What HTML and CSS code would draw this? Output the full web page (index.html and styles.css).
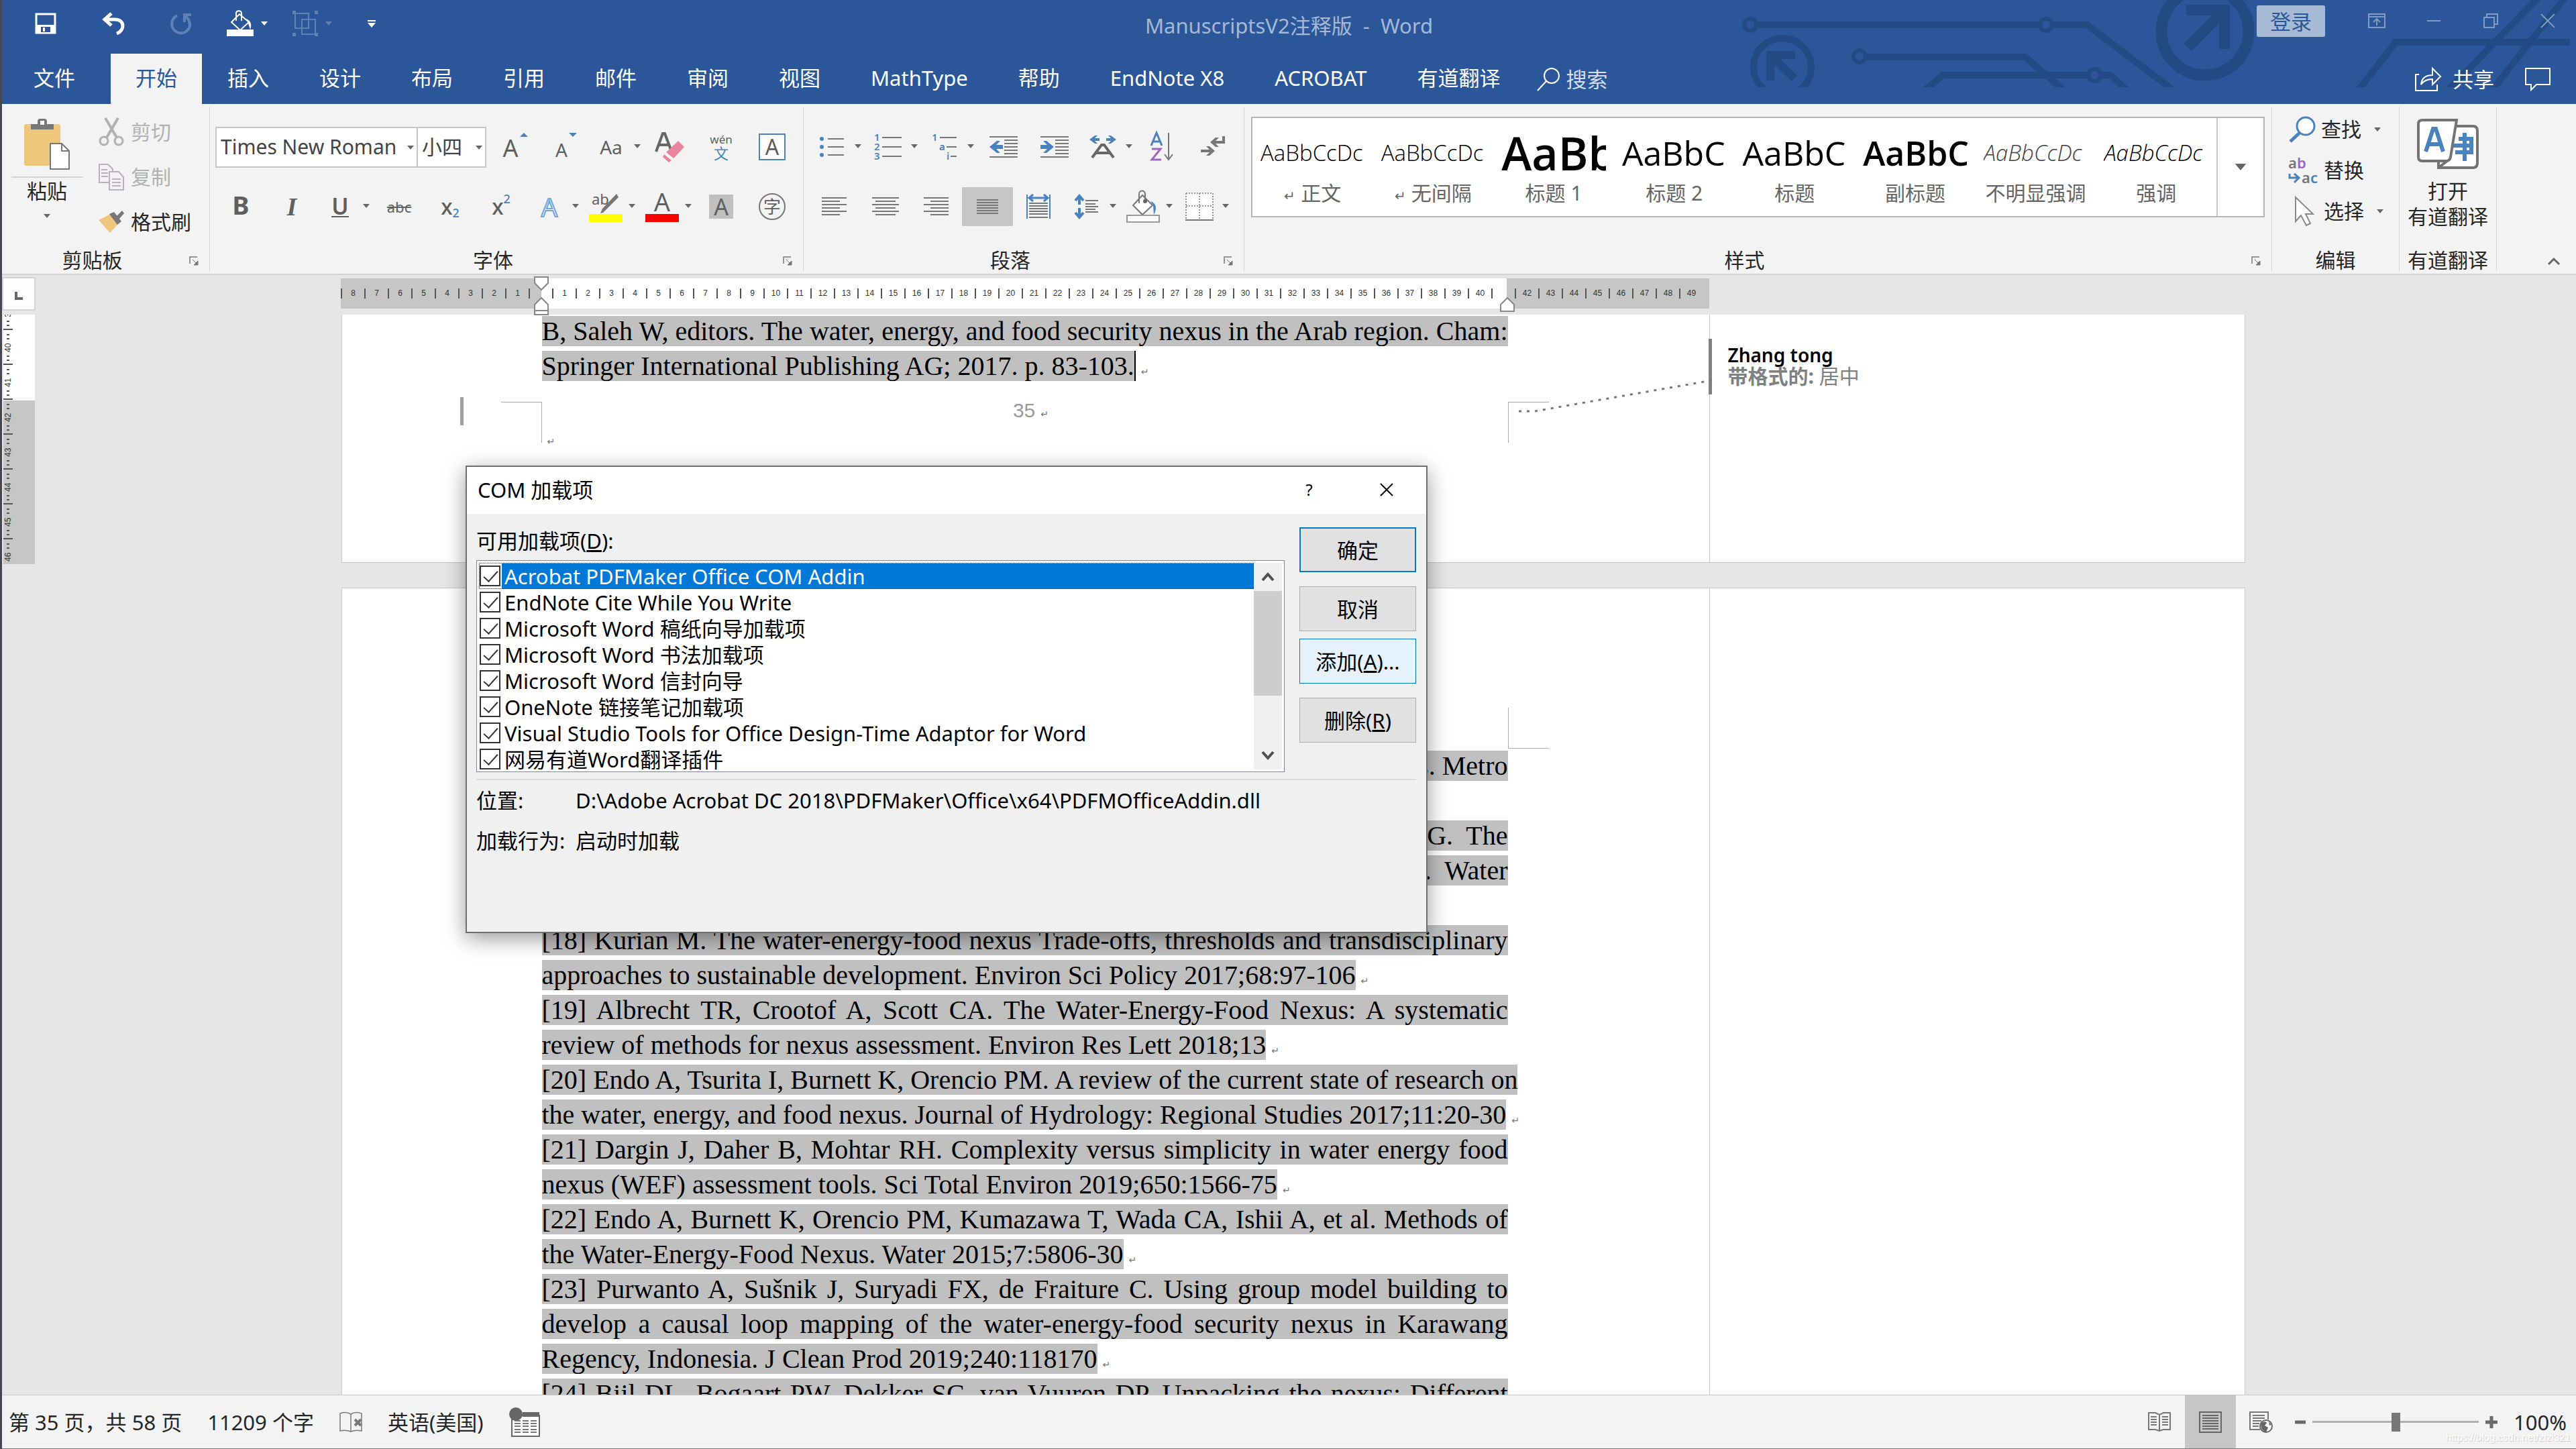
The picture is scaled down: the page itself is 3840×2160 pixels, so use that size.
FILE: index.html
```html
<!DOCTYPE html>
<html lang="zh-CN">

<head>
    <meta charset="utf-8">
    <title>ManuscriptsV2注释版 - Word</title>
    <link rel="stylesheet" href="styles.css">
</head>

<body>
    <svg width="0" height="0" class="defs">
        <symbol id="caret" viewBox="0 0 10 6"><path d="M0 0h10L5 6z" fill="currentColor"/></symbol>
        <symbol id="launcher" viewBox="0 0 14 14"><path d="M1 11V1h11" fill="none" stroke="#777" stroke-width="1.5"/><path d="M5 5l6 6M13 7v6H7z" fill="#777" stroke="#777"/></symbol>
        <symbol id="bucket" viewBox="0 0 50 50"><path d="M24 8L10 23l14 14 15-14z" fill="#fff" stroke="#777" stroke-width="2"/><path d="M19 20V6c0-6 9-6 9 0v14" fill="none" stroke="#777" stroke-width="2"/><circle cx="28" cy="17" r="3" fill="#666"/><path d="M36 17c9 3 10 11 5 20l-1-14z" fill="#4a82bd"/><path d="M1 38h48v10H1z" fill="#fff" stroke="#999" stroke-width="2"/></symbol>
    </svg>

    <div class="app">
        <header class="header">
            <svg class="circuit" viewBox="0 0 1260 130" width="1260" height="130" fill="none" stroke="#244a84" stroke-width="10">
                <circle cx="29" cy="37" r="9" stroke-width="6"/>
                <path d="M38 37H461M479 37h52L659 134"/>
                <circle cx="470" cy="37" r="9" stroke-width="6"/>
                <circle cx="77" cy="100" r="43"/>
                <path d="M59 120V82H96M62 85l33 32" stroke-width="12"/>
                <circle cx="192" cy="84" r="9" stroke-width="6"/>
                <path d="M201 85H439L496 134M290 134l26-22H533"/>
                <circle cx="542" cy="112" r="9" stroke-width="6"/>
                <path d="M551 112h15l24 22"/>
                <circle cx="707" cy="47" r="65" stroke-width="17"/>
                <path d="M679 15H736V73M681 71l52-53" stroke-width="16"/>
                <path d="M936 134L991 63H1251M1070 134L1204 -4M1135 134L1244 -4"/>
            </svg>
            <div class="title-row">
                <div class="quick">
                    <button class="quick-btn" aria-label="保存"><svg width="32" height="32" viewBox="0 0 32 32"><path d="M2 2h28v28H2z" fill="none" stroke="#fff" stroke-width="3"/><path d="M2 18h28v12H2z" fill="#fff"/><path d="M9 21h14v8H9z" fill="#2b579a"/><path d="M12 22h3v6h-3z" fill="#fff"/></svg></button>
                    <button class="quick-btn" aria-label="撤消"><svg width="34" height="34" viewBox="0 0 34 34"><path d="M14 2L4 11l10 9M5 11h14c16 0 15 17 3 21" fill="none" stroke="#fff" stroke-width="5"/></svg></button>
                    <button class="quick-btn faded" aria-label="恢复"><svg width="34" height="34" viewBox="0 0 34 34"><path d="M11 5C0 11 1 25 11 30c12 5 22-6 18-16-1-4-3-6-6-8M32 4H22v11" fill="none" stroke="#fff" stroke-width="4"/></svg></button>
                    <button class="quick-btn wide" aria-label="底纹"><svg width="40" height="40" viewBox="0 0 40 40"><path d="M19 6L7 18l13 12 13-12zM14 16V5c0-5 8-5 8 0v11" fill="none" stroke="#fff" stroke-width="2"/><path d="M29 13c7 3 9 9 6 16l-3-9z" fill="#fff"/><path d="M0 29h40v10H0z" fill="#fff"/></svg><svg class="caret white"><use href="#caret"/></svg></button>
                    <button class="quick-btn wide faded" aria-label="组合"><svg width="38" height="38" viewBox="0 0 38 38"><path d="M4 4h20v22H4zM14 13h20v22H14z" fill="none" stroke="#fff" stroke-width="2"/><path d="M0 0h5v5H0zM33 0h5v5h-5zM0 33h5v5H0zM33 33h5v5h-5z" fill="#fff"/></svg><svg class="caret white"><use href="#caret"/></svg></button>
                    <button class="quick-btn last" aria-label="自定义快速访问工具栏"><svg width="12" height="11" viewBox="0 0 12 11"><path d="M0 0h12v2H0zM0 4h12l-6 7z" fill="#fff"/></svg></button>
                </div>
                <div class="doc-title">ManuscriptsV2注释版&nbsp; -&nbsp; Word</div>
                <div class="window-tools">
                    <button class="login">登录</button>
                    <button class="win-btn" aria-label="功能区显示选项"><svg width="26" height="22" viewBox="0 0 26 22" fill="none" stroke="#7f9ac3" stroke-width="2"><path d="M1 1h24v20H1zM1 5h24M13 18V8M8 13l5-5 5 5"/></svg></button>
                    <button class="win-btn" aria-label="最小化"><svg width="20" height="22" viewBox="0 0 20 22"><path d="M0 11h20" stroke="#7f9ac3" stroke-width="2"/></svg></button>
                    <button class="win-btn" aria-label="还原"><svg width="22" height="22" viewBox="0 0 22 22" fill="none" stroke="#7f9ac3" stroke-width="2"><path d="M1 6h15v15H1zM5 6V1h16v15h-5"/></svg></button>
                    <button class="win-btn" aria-label="关闭"><svg width="22" height="22" viewBox="0 0 22 22"><path d="M1 1l20 20M21 1L1 21" stroke="#7f9ac3" stroke-width="2"/></svg></button>
                </div>
            </div>
            <nav class="tabs">
                <button class="tab">文件</button>
                <button class="tab active">开始</button>
                <button class="tab">插入</button>
                <button class="tab">设计</button>
                <button class="tab">布局</button>
                <button class="tab">引用</button>
                <button class="tab">邮件</button>
                <button class="tab">审阅</button>
                <button class="tab">视图</button>
                <button class="tab">MathType</button>
                <button class="tab">帮助</button>
                <button class="tab">EndNote X8</button>
                <button class="tab">ACROBAT</button>
                <button class="tab">有道翻译</button>
                <button class="search"><svg width="36" height="36" viewBox="0 0 36 36" fill="none" stroke="#fff" stroke-width="2"><circle cx="22" cy="13" r="11"/><path d="M14 21L1 35"/></svg>搜索</button>
                <div class="share-tools">
                    <button class="share"><svg width="40" height="36" viewBox="0 0 40 36" fill="none" stroke="#fff" stroke-width="2"><path d="M6 11H1v24h32v-9M9 26c1-10 7-14 17-14V2l12 12-12 12v-8c-8 0-13 2-17 8z"/></svg>共享</button>
                    <button class="share" aria-label="批注"><svg width="38" height="34" viewBox="0 0 38 34" fill="none" stroke="#fff" stroke-width="2"><path d="M1 1h36v24H17l-8 8v-8H1z"/></svg></button>
                </div>
            </nav>
        </header>

        <section class="ribbon">
            <div class="group">
                <div class="group-body clipboard">
                    <button class="paste">
                        <svg width="68" height="76" viewBox="0 0 68 76"><rect y="8" width="54" height="62" rx="3" fill="#eec77d"/><path d="M10 8h10V4q0-4 4-4h6q4 0 4 4v4h10v8H10z" fill="#777"/><path d="M24 3h6v6h-6z" fill="#fff"/><path d="M39 37h17l11 11v27H39z" fill="#fff" stroke="#777" stroke-width="2"/><path d="M56 37v11h11" fill="none" stroke="#777" stroke-width="2"/></svg>
                        <span class="paste-label">粘贴</span>
                        <svg class="caret"><use href="#caret"/></svg>
                    </button>
                    <div class="clip-list">
                        <button class="text-btn off"><svg width="38" height="42" viewBox="0 0 38 42" fill="none" stroke="#b1b1b1" stroke-width="3"><path d="M10 0l17 29M29 0L12 29" stroke-width="4"/><circle cx="8" cy="34" r="6"/><circle cx="30" cy="34" r="6"/></svg>剪切</button>
                        <button class="text-btn off"><svg width="38" height="40" viewBox="0 0 38 40" fill="#f6f0f8" stroke="#b9b1bc" stroke-width="2"><path d="M1 1h13l7 7v20H1z"/><path d="M4 9h9M4 14h10M4 19h10"/><path d="M16 12h14l7 8v19H16z"/><path d="M20 23h13M20 28h13M20 33h13"/></svg>复制</button>
                        <button class="text-btn"><svg width="38" height="34" viewBox="0 0 38 34"><path d="M0 14L18 5l12 14-13 14z" fill="#eec77d"/><path d="M16 5l7-3 11 14-6 5z" fill="#777"/><path d="M26 9l9-9 3 4-8 9z" fill="#777"/></svg>格式刷</button>
                    </div>
                </div>
                <div class="group-label">剪贴板</div>
                <svg class="launcher"><use href="#launcher"/></svg>
            </div>

            <div class="group">
                <div class="group-body">
                    <div class="tool-row">
                        <label class="combo"><select class="font-name" aria-label="字体"><option>Times New Roman</option></select><svg class="caret"><use href="#caret"/></svg></label>
                        <label class="combo"><select class="font-size" aria-label="字号"><option>小四</option></select><svg class="caret"><use href="#caret"/></svg></label>
                        <button class="tool grow">A<svg width="12" height="6" viewBox="0 0 12 6"><path d="M0 6h12L6 0z" fill="#4a82bd"/></svg></button>
                        <button class="tool grow small">A<svg width="12" height="6" viewBox="0 0 12 6"><path d="M0 0h12L6 6z" fill="#4a82bd"/></svg></button>
                        <button class="split"><span class="aa">Aa</span><svg class="caret"><use href="#caret"/></svg></button>
                        <button class="tool" aria-label="清除格式"><svg width="46" height="46" viewBox="0 0 46 46"><path d="M2 30L12 3h3l9 24M6 20h14" fill="none" stroke="#666" stroke-width="4"/><path d="M17 31L35 14l9 9-16 17z" fill="#e8859a"/><path d="M14 34l11 9-4 3-9-8z" fill="#e8859a"/></svg></button>
                        <button class="tool phonetic"><span>wén</span><span class="blue">文</span></button>
                        <button class="tool"><span class="boxed">A</span></button>
                    </div>
                    <div class="tool-row">
                        <button class="tool bold">B</button>
                        <button class="tool italic">I</button>
                        <button class="split"><span class="under">U</span><svg class="caret"><use href="#caret"/></svg></button>
                        <button class="tool strike">abc</button>
                        <button class="tool script">x<sub>2</sub></button>
                        <button class="tool script">x<sup>2</sup></button>
                        <button class="split"><span class="outline">A</span><svg class="caret"><use href="#caret"/></svg></button>
                        <button class="split"><span class="bar yellow">ab<svg class="pen" width="30" height="30" viewBox="0 0 30 30"><path d="M27 1l3 5-18 18-5 5-4 1 3-7z" fill="#777"/></svg></span><svg class="caret"><use href="#caret"/></svg></button>
                        <button class="split"><span class="bar red">A</span><svg class="caret"><use href="#caret"/></svg></button>
                        <button class="tool"><span class="shaded">A</span></button>
                        <button class="tool"><span class="circled">字</span></button>
                    </div>
                </div>
                <div class="group-label">字体</div>
                <svg class="launcher"><use href="#launcher"/></svg>
            </div>

            <div class="group">
                <div class="group-body">
                    <div class="tool-row">
                        <button class="split" aria-label="项目符号"><svg width="36" height="32" viewBox="0 0 36 32"><g fill="#4a82bd"><circle cx="3" cy="4" r="3"/><circle cx="3" cy="16" r="3"/><circle cx="3" cy="28" r="3"/></g><path d="M12 4h24M12 16h24M12 28h24" stroke="#777" stroke-width="2"/></svg><svg class="caret"><use href="#caret"/></svg></button>
                        <button class="split" aria-label="编号"><svg width="42" height="40" viewBox="0 0 42 40"><g class="num"><text x="0" y="11">1</text><text x="0" y="25">2</text><text x="0" y="39">3</text></g><path d="M12 6h29M12 20h29M12 34h29" stroke="#777" stroke-width="2"/></svg><svg class="caret"><use href="#caret"/></svg></button>
                        <button class="split" aria-label="多级列表"><svg width="38" height="40" viewBox="0 0 38 40"><g class="num"><text x="0" y="11">1</text><text x="11" y="25">a</text><text x="22" y="39">i</text></g><path d="M12 6h25M22 20h15M28 34h9" stroke="#777" stroke-width="2"/></svg><svg class="caret"><use href="#caret"/></svg></button>
                        <button class="tool" aria-label="减少缩进量"><svg width="42" height="34" viewBox="0 0 42 34"><path d="M0 2h42M22 7h20M22 12h20M22 17h20M22 22h20M22 27h20M0 32h42" stroke="#777" stroke-width="2"/><path d="M0 17L11 8h5l-6 6h10v6H10l6 6h-5z" fill="#4a82bd"/></svg></button>
                        <button class="tool" aria-label="增加缩进量"><svg width="42" height="34" viewBox="0 0 42 34"><path d="M0 2h42M22 7h20M22 12h20M22 17h20M22 22h20M22 27h20M0 32h42" stroke="#777" stroke-width="2"/><path d="M20 17L9 8H4l6 6H0v6h10l-6 6h5z" fill="#4a82bd"/></svg></button>
                        <button class="split" aria-label="中文版式"><svg width="40" height="36" viewBox="0 0 40 36"><path d="M0 7l8-6h4L8 5h7v4H8l4 4H8zM40 7l-8-6h-4l4 4h-7v4h7l-4 4h4z" fill="#4a82bd"/><path d="M4 34L18 15h4l14 19M10 27h20" fill="none" stroke="#666" stroke-width="4"/></svg><svg class="caret"><use href="#caret"/></svg></button>
                        <button class="tool" aria-label="排序"><svg width="36" height="44" viewBox="0 0 36 44" fill="none" stroke-width="3"><path d="M2 20L10 1l8 19M5 14h10" stroke="#4a82bd"/><path d="M3 25h13L3 41h14" stroke="#9f67b9"/><path d="M28 1v40M22 33l6 8 6-8" stroke="#777" stroke-width="2"/></svg></button>
                        <button class="tool" aria-label="显示编辑标记"><svg width="36" height="34" viewBox="0 0 36 34"><path d="M36 1v11H22l5 5h-5l-8-7 8-7h5l-5 5h10V1zM0 21h13l-5-5h5l8 7-8 7H8l5-5H0z" fill="#777"/></svg></button>
                    </div>
                    <div class="tool-row">
                        <button class="tool" aria-label="左对齐"><svg width="38" height="28" viewBox="0 0 38 28"><path d="M0 1h37M0 6h27M0 11h37M0 16h27M0 21h37M0 26h27" stroke="#777" stroke-width="2"/></svg></button>
                        <button class="tool" aria-label="居中"><svg width="40" height="28" viewBox="0 0 40 28"><path d="M0 1h40M5 6h30M0 11h40M5 16h30M0 21h40M5 26h30" stroke="#777" stroke-width="2"/></svg></button>
                        <button class="tool" aria-label="右对齐"><svg width="38" height="28" viewBox="0 0 38 28"><path d="M0 1h37M10 6h27M0 11h37M10 16h27M0 21h37M10 26h27" stroke="#777" stroke-width="2"/></svg></button>
                        <button class="tool pressed" aria-label="两端对齐"><svg width="32" height="22" viewBox="0 0 32 22"><path d="M0 1h32M0 5h32M0 9h32M0 13h32M0 17h32M0 21h32" stroke="#777" stroke-width="2"/></svg></button>
                        <button class="tool" aria-label="分散对齐"><svg width="36" height="36" viewBox="0 0 36 36"><path d="M1 0v36M35 0v36" stroke="#4a82bd" stroke-width="2"/><path d="M4 5h28M10 0L4 5l6 5M26 0l6 5-6 5" fill="none" stroke="#4a82bd" stroke-width="3"/><path d="M4 13h28M4 17h28M4 21h28M4 25h28M4 29h28M4 34h28" stroke="#777" stroke-width="2"/></svg></button>
                        <button class="split" aria-label="行距"><svg width="36" height="36" viewBox="0 0 36 36"><path d="M7 2v13M7 20v14M1 9l6-7 6 7M1 27l6 7 6-7" fill="none" stroke="#4a82bd" stroke-width="4"/><path d="M16 9h19M16 14h15M16 18h19M16 22h15M16 26h19" stroke="#777" stroke-width="2"/></svg><svg class="caret"><use href="#caret"/></svg></button>
                        <button class="split" aria-label="底纹"><svg width="50" height="50"><use href="#bucket"/></svg><svg class="caret"><use href="#caret"/></svg></button>
                        <button class="split" aria-label="边框"><svg width="42" height="42" viewBox="0 0 42 42"><path d="M1 1h40v39H1z" fill="#fff"/><path d="M1 1h40v39M1 1v39M21 1v39M1 20h40" fill="none" stroke="#999" stroke-width="2" stroke-dasharray="2 2"/><path d="M0 41h42" stroke="#777" stroke-width="2"/></svg><svg class="caret"><use href="#caret"/></svg></button>
                    </div>
                </div>
                <div class="group-label">段落</div>
                <svg class="launcher"><use href="#launcher"/></svg>
            </div>

            <div class="group styles-group">
                <div class="gallery">
                    <button class="style-item"><span class="sample">AaBbCcDc</span><span class="style-name"><small>↵</small> 正文</span></button>
                    <button class="style-item"><span class="sample">AaBbCcDc</span><span class="style-name"><small>↵</small> 无间隔</span></button>
                    <button class="style-item"><span class="sample huge">AaBb</span><span class="style-name">标题 1</span></button>
                    <button class="style-item"><span class="sample large">AaBbC</span><span class="style-name">标题 2</span></button>
                    <button class="style-item"><span class="sample large">AaBbC</span><span class="style-name">标题</span></button>
                    <button class="style-item"><span class="sample large strong">AaBbC</span><span class="style-name">副标题</span></button>
                    <button class="style-item"><span class="sample subtle">AaBbCcDc</span><span class="style-name">不明显强调</span></button>
                    <button class="style-item"><span class="sample slanted">AaBbCcDc</span><span class="style-name">强调</span></button>
                    <button class="gallery-more" aria-label="其他样式"><svg width="20" height="10"><use href="#caret"/></svg></button>
                </div>
                <div class="group-label">样式</div>
                <svg class="launcher"><use href="#launcher"/></svg>
            </div>

            <div class="group edit-group">
                <div class="edit-list">
                    <button class="text-btn"><svg width="42" height="40" viewBox="0 0 42 40" fill="none" stroke="#4a82bd"><circle cx="26" cy="15" r="13" fill="#fff" stroke-width="3"/><path d="M17 25L3 38" stroke-width="5"/></svg>查找<svg class="caret"><use href="#caret"/></svg></button>
                    <button class="text-btn"><svg width="46" height="42" viewBox="0 0 46 42"><text x="0" y="18" class="ab">a<tspan fill="#9f67b9">b</tspan></text><text x="20" y="40" class="ab">a<tspan fill="#4a82bd">c</tspan></text><path d="M2 26v6h12M9 26l7 6-7 7" fill="none" stroke="#4a82bd" stroke-width="3"/></svg>替换</button>
                    <button class="text-btn"><svg width="46" height="44" viewBox="0 0 46 44"><path d="M11 1v36l8-9 8 15 6-3-7-14h11z" fill="#fff" stroke="#888" stroke-width="2"/></svg>选择<svg class="caret"><use href="#caret"/></svg></button>
                </div>
                <div class="group-label">编辑</div>
            </div>

            <div class="group youdao-group">
                <button class="youdao">
                    <svg width="92" height="76" viewBox="0 0 92 76"><path d="M56 11h27q7 0 7 7v48q0 7-7 7H32V61" fill="#fff" stroke="#737373" stroke-width="4"/><path d="M62 30h19v20H57M71 21v42M54 40h27" fill="none" stroke="#4a82bd" stroke-width="6"/><path d="M8 2h51l-9 55q-1 6-7 6H8q-6 0-6-6V8q0-6 6-6z" fill="#fff" stroke="#737373" stroke-width="4"/><path d="M13 49L24 15h4l11 34M17 38h17" fill="none" stroke="#4a82bd" stroke-width="6"/><path d="M33 72l12-9" stroke="#737373" stroke-width="4"/></svg>
                    <span>打开</span>
                    <span>有道翻译</span>
                </button>
                <div class="group-label">有道翻译</div>
            </div>
            <button class="collapse" aria-label="折叠功能区"><svg width="18" height="12" viewBox="0 0 18 12"><path d="M1 10l8-8 8 8" fill="none" stroke="#666" stroke-width="3"/></svg></button>
        </section>

        <div class="ruler-row">
            <div class="tab-stop"><svg width="12" height="12" viewBox="0 0 12 12"><path d="M2 0v10h10" fill="none" stroke="#666" stroke-width="4"/></svg></div>
            <div class="ruler-track">
                <div class="ruler">
                    <i>8</i><i>7</i><i>6</i><i>5</i><i>4</i><i>3</i><i>2</i><i>1</i><i></i><i>1</i><i>2</i><i>3</i><i>4</i><i>5</i><i>6</i><i>7</i><i>8</i><i>9</i><i>10</i><i>11</i><i>12</i><i>13</i><i>14</i><i>15</i><i>16</i><i>17</i><i>18</i><i>19</i><i>20</i><i>21</i><i>22</i><i>23</i><i>24</i><i>25</i><i>26</i><i>27</i><i>28</i><i>29</i><i>30</i><i>31</i><i>32</i><i>33</i><i>34</i><i>35</i><i>36</i><i>37</i><i>38</i><i>39</i><i>40</i><i></i><i>42</i><i>43</i><i>44</i><i>45</i><i>46</i><i>47</i><i>48</i><i>49</i>
                    <svg class="indent-left" width="22" height="58" viewBox="0 0 22 58" fill="#fff" stroke="#888" stroke-width="2"><path d="M1 1h20v9L11 20 1 10zM1 51V42l10-10 10 10v15H1zM1 51h20"/></svg>
                    <svg class="indent-right" width="22" height="22" viewBox="0 0 22 22" fill="#fff" stroke="#888" stroke-width="2"><path d="M1 21V11L11 1l10 10v10z"/></svg>
                </div>
            </div>
        </div>

        <main class="canvas">
            <div class="v-ruler">
                <i class="cut">39</i><i>40</i><i>41</i><i>42</i><i>43</i><i>44</i><i>45</i><i>46</i>
            </div>
            <div class="pages">
                <article class="page first">
                    <div class="page-body">
                        <p class="line full"><mark>B, Saleh W, editors. The water, energy, and food security nexus in the Arab region. Cham:</mark></p>
                        <p class="line"><mark class="cursor">Springer International Publishing AG; 2017. p. 83-103.</mark><small>↵</small></p>
                        <footer class="page-footer">35<small>↵</small></footer>
                        <span class="change-bar"></span>
                        <span class="corner bottom-left"></span>
                        <span class="corner bottom-right"></span>
                        <small class="footer-mark">↵</small>
                        <svg class="connector" width="290" height="52" viewBox="0 0 290 52"><path d="M2 49h24L290 3" fill="none" stroke="#777" stroke-width="3" stroke-dasharray="4 8"/></svg>
                    </div>
                    <aside class="markup">
                        <div class="note">
                            <b class="author">Zhang tong</b>
                            <span class="change"><b>带格式的:</b> 居中</span>
                        </div>
                    </aside>
                </article>
                <article class="page second">
                    <div class="page-body">
                        <span class="corner top-right"></span>
                        <p class="line end"><mark>s. Metro</mark></p>
                        <p class="line"></p>
                        <p class="line end"><mark>G.&nbsp; The</mark></p>
                        <p class="line end"><mark>.&nbsp; Water</mark></p>
                        <p class="line"></p>
                        <p class="line full"><mark>[18] Kurian M. The water-energy-food nexus Trade-offs, thresholds and transdisciplinary</mark></p>
                        <p class="line"><mark>approaches to sustainable development. Environ Sci Policy 2017;68:97-106</mark><small>↵</small></p>
                        <p class="line full"><mark>[19] Albrecht TR, Crootof A, Scott CA. The Water-Energy-Food Nexus: A systematic</mark></p>
                        <p class="line"><mark>review of methods for nexus assessment. Environ Res Lett 2018;13</mark><small>↵</small></p>
                        <p class="line full"><mark>[20] Endo A, Tsurita I, Burnett K, Orencio PM. A review of the current state of research on</mark></p>
                        <p class="line"><mark>the water, energy, and food nexus. Journal of Hydrology: Regional Studies 2017;11:20-30</mark><small>↵</small></p>
                        <p class="line full"><mark>[21] Dargin J, Daher B, Mohtar RH. Complexity versus simplicity in water energy food</mark></p>
                        <p class="line"><mark>nexus (WEF) assessment tools. Sci Total Environ 2019;650:1566-75</mark><small>↵</small></p>
                        <p class="line full"><mark>[22] Endo A, Burnett K, Orencio PM, Kumazawa T, Wada CA, Ishii A, et al. Methods of</mark></p>
                        <p class="line"><mark>the Water-Energy-Food Nexus. Water 2015;7:5806-30</mark><small>↵</small></p>
                        <p class="line full"><mark>[23] Purwanto A, Sušnik J, Suryadi FX, de Fraiture C. Using group model building to</mark></p>
                        <p class="line full"><mark>develop a causal loop mapping of the water-energy-food security nexus in Karawang</mark></p>
                        <p class="line"><mark>Regency, Indonesia. J Clean Prod 2019;240:118170</mark><small>↵</small></p>
                        <p class="line full"><mark>[24] Bijl DL, Bogaart PW, Dekker SC, van Vuuren DP. Unpacking the nexus: Different</mark></p>
                    </div>
                    <aside class="markup"></aside>
                </article>
            </div>
        </main>

        <footer class="status">
            <span>第 35 页，共 58 页</span>
            <span>11209 个字</span>
            <svg width="34" height="30" viewBox="0 0 34 30"><path d="M1 2c5-2 11-2 16 1 5-3 11-3 16-1v26c-5-1-11-1-16 1-5-2-11-2-16-1zM17 3v26" fill="none" stroke="#777" stroke-width="1.5"/><path d="M23 11l9 9M32 11l-9 9" stroke="#777" stroke-width="4"/></svg>
            <span>英语(美国)</span>
            <svg width="46" height="44" viewBox="0 0 46 44"><path d="M4 12h41v31H4z" fill="#fff" stroke="#666" stroke-width="2"/><path d="M20 7h25v7H20z" fill="#666"/><circle cx="10" cy="10" r="10" fill="#666"/><path d="M8 20h35M8 24h35M8 28h35M8 33h35M8 37h35" stroke="#777" stroke-width="2" stroke-dasharray="9 3"/></svg>
            <div class="views">
                <button class="view" aria-label="阅读视图"><svg width="34" height="30" viewBox="0 0 34 30"><path d="M1 1h10l6 3 6-3h10v25H23l-6 2-6-2H1zM17 4v24M4 7h9M4 11h9M4 15h9M4 19h9M21 7h9M21 11h9M21 15h9M21 19h9" fill="none" stroke="#777" stroke-width="2"/></svg></button>
                <button class="view current" aria-label="页面视图"><svg width="34" height="32" viewBox="0 0 34 32"><path d="M1 1h32v30H1zM5 6h24M5 10h24M5 14h24M5 18h24M5 22h24M5 26h24" fill="none" stroke="#666" stroke-width="2"/></svg></button>
                <button class="view" aria-label="Web 版式视图"><svg width="36" height="32" viewBox="0 0 36 32"><path d="M28 12V1H1v26h15M5 6h18M5 10h18M5 14h13M5 18h10M5 22h9" fill="none" stroke="#777" stroke-width="2"/><circle cx="25" cy="22" r="9" fill="#fff" stroke="#666" stroke-width="2"/><path d="M17 18c4-4 8-3 9-1l-3 4 5 3-3 7c-5-1-8-6-8-13zM29 15l4 5-3 1z" fill="#666"/></svg></button>
            </div>
            <button class="zoom-btn" aria-label="缩小"><svg width="16" height="16" viewBox="0 0 16 16"><path d="M0 8h16" stroke="#6a6a6a" stroke-width="5"/></svg></button>
            <input class="zoom" type="range" min="0" max="200" value="100" aria-label="缩放">
            <button class="zoom-btn" aria-label="放大"><svg width="18" height="18" viewBox="0 0 18 18"><path d="M0 9h18M9 0v18" stroke="#6a6a6a" stroke-width="5"/></svg></button>
            <span class="percent">100%</span>
            <span class="watermark">https://blog.csdn.net/ztzi321</span>
        </footer>

        <div class="dialog" role="dialog" aria-label="COM 加载项">
            <div class="dialog-title">
                <span>COM 加载项</span>
                <button class="dialog-ctl">?</button>
                <button class="dialog-ctl" aria-label="关闭"><svg width="20" height="20" viewBox="0 0 20 20"><path d="M1 1l18 18M19 1L1 19" stroke="#000" stroke-width="2"/></svg></button>
            </div>
            <div class="dialog-body">
                <div class="dialog-main">
                    <div class="list-label">可用加载项(<u>D</u>):</div>
                    <div class="list">
                        <div class="items">
                            <label class="item selected"><input type="checkbox" checked><span>Acrobat PDFMaker Office COM Addin</span></label>
                            <label class="item"><input type="checkbox" checked><span>EndNote Cite While You Write</span></label>
                            <label class="item"><input type="checkbox" checked><span>Microsoft Word 稿纸向导加载项</span></label>
                            <label class="item"><input type="checkbox" checked><span>Microsoft Word 书法加载项</span></label>
                            <label class="item"><input type="checkbox" checked><span>Microsoft Word 信封向导</span></label>
                            <label class="item"><input type="checkbox" checked><span>OneNote 链接笔记加载项</span></label>
                            <label class="item"><input type="checkbox" checked><span>Visual Studio Tools for Office Design-Time Adaptor for Word</span></label>
                            <label class="item"><input type="checkbox" checked><span>网易有道Word翻译插件</span></label>
                        </div>
                        <div class="scroll">
                            <svg width="20" height="14" viewBox="0 0 20 14"><path d="M2 12l8-9 8 9" fill="none" stroke="#505050" stroke-width="4"/></svg>
                            <div class="thumb"></div>
                            <svg width="20" height="14" viewBox="0 0 20 14"><path d="M2 2l8 9 8-9" fill="none" stroke="#505050" stroke-width="4"/></svg>
                        </div>
                    </div>
                </div>
                <div class="dialog-buttons">
                    <button class="btn default">确定</button>
                    <button class="btn spaced">取消</button>
                    <button class="btn hover">添加(<u>A</u>)...</button>
                    <button class="btn spaced">删除(<u>R</u>)</button>
                </div>
            </div>
            <dl class="info">
                <dt>位置:</dt>
                <dd>D:\Adobe Acrobat DC 2018\PDFMaker\Office\x64\PDFMOfficeAddin.dll</dd>
                <dt>加载行为:</dt>
                <dd>启动时加载</dd>
            </dl>
        </div>
    </div>
</body>

</html>
```
FILE: styles.css
```css
* {
    box-sizing: border-box;
}

body {
    margin: 0;
    font-family: "Noto Sans", "Noto Sans CJK SC", sans-serif;
    font-size: 31px;
    line-height: 40px;
    color: #262626;
}

button,
select {
    font: inherit;
    color: inherit;
    border: 0;
    padding: 0;
    background: none;
    white-space: nowrap;
}

svg {
    flex: none;
    overflow: visible;
}

.defs {
    position: absolute;
}

.caret {
    width: 10px;
    height: 6px;
    color: #666;
}

.caret.white {
    color: #fff;
}

.app {
    position: relative;
    display: flex;
    flex-direction: column;
    height: 100vh;
    overflow: hidden;
    border-left: 3px solid #45474d;
    background: #e6e6e6;
}

/* header */

.header {
    position: relative;
    height: 155px;
    background: #2b579a;
    color: #fff;
}

.circuit {
    position: absolute;
    top: 0;
    right: 0;
    overflow: hidden;
}

.title-row {
    position: relative;
    display: grid;
    grid-template-columns: 1fr auto 1fr;
    height: 80px;
}

.quick {
    display: flex;
    align-items: center;
    height: 70px;
    padding-left: 14px;
}

.quick-btn {
    display: flex;
    align-items: center;
    justify-content: center;
    gap: 11px;
    width: 101px;
    height: 64px;
}

.quick-btn.wide {
    width: 97px;
}

.quick-btn.last {
    width: 80px;
}

.faded {
    opacity: .25;
}

.doc-title {
    line-height: 76px;
    color: #a5b8d6;
}

.window-tools {
    display: flex;
    justify-content: flex-end;
}

.login {
    width: 102px;
    height: 47px;
    margin: 8px 34px 0 0;
    border-radius: 3px;
    background: #a7bad5;
    color: #2b579a;
    line-height: 44px;
}

.win-btn {
    display: flex;
    align-items: center;
    justify-content: center;
    width: 85px;
    height: 62px;
}

.tabs {
    position: relative;
    display: flex;
    gap: 1px;
    height: 75px;
}

.tab {
    height: 75px;
    padding: 0 37px 3px;
}

.tab:first-child {
    padding: 0 52px 3px 47px;
}

.tab.active {
    background: #f3f3f3;
    color: #2b579a;
}

.search {
    display: flex;
    align-items: center;
    gap: 8px;
    margin-left: 16px;
    color: #d5ddeb;
}

.share-tools {
    display: flex;
    align-items: center;
    gap: 46px;
    margin-left: auto;
    padding-right: 38px;
}

.share {
    display: flex;
    align-items: center;
    gap: 16px;
}

/* ribbon */

.ribbon {
    position: relative;
    display: flex;
    height: 255px;
    padding: 4px 0;
    background: #f3f3f3;
    border-bottom: 2px solid #d2d2d2;
    font-size: 30px;
}

.group {
    position: relative;
    display: flex;
    flex-direction: column;
    border-right: 1px solid #d4d4d4;
    padding: 0 8px;
}

.group-body {
    display: flex;
    flex-direction: column;
    gap: 29px;
    padding-top: 30px;
}

.group-label {
    position: absolute;
    left: 0;
    right: 40px;
    bottom: -4px;
    text-align: center;
}

.launcher {
    position: absolute;
    right: 16px;
    bottom: 8px;
    width: 14px;
    height: 14px;
}

.clipboard {
    flex-direction: row;
    gap: 22px;
    width: 293px;
    padding-top: 5px;
}

.paste {
    display: flex;
    flex-direction: column;
    align-items: center;
    width: 114px;
    padding: 13px 0 0 4px;
}

.paste-label {
    width: 106px;
    margin: 10px 0 14px;
    border-top: 2px solid #d2d2d2;
}

.clip-list {
    display: flex;
    flex-direction: column;
    gap: 2px;
}

.text-btn {
    display: flex;
    align-items: center;
    gap: 10px;
    height: 65px;
}

.off {
    color: #b1b1b1;
}

.tool-row {
    display: flex;
    align-items: center;
    height: 60px;
}

.combo {
    position: relative;
}

.combo .caret {
    position: absolute;
    right: 6px;
    top: 28px;
    pointer-events: none;
}

.combo select {
    display: block;
    appearance: none;
    height: 61px;
    padding-left: 6px;
    border: 2px solid #c6c6c6;
    background: #fff;
    color: #444;
}

.font-name {
    width: 302px;
}

.font-size {
    width: 104px;
    margin-left: -2px;
}

.tool,
.split {
    display: flex;
    align-items: center;
    justify-content: center;
    height: 58px;
    color: #5f5f5f;
}

.tool {
    width: 76px;
}

.split {
    position: relative;
    width: 84px;
    padding-right: 16px;
}

.split > .caret {
    position: absolute;
    right: 6px;
    top: 25px;
}

.pressed {
    background: #c6c6c6;
}

.grow {
    gap: 2px;
    align-items: flex-start;
    padding-left: 10px;
    font-size: 36px;
    line-height: 62px;
}

.grow svg {
    margin-top: 8px;
}

.grow.small {
    font-size: 28px;
    line-height: 66px;
}

.aa {
    font-size: 28px;
}

.phonetic {
    flex-direction: column;
    font-size: 17px;
    line-height: 17px;
}

.blue {
    color: #4a82bd;
    font-size: 22px;
    line-height: 24px;
}

.boxed,
.shaded,
.circled {
    width: 40px;
    height: 40px;
    line-height: 36px;
    text-align: center;
}

.boxed {
    border: 2px solid #4a82bd;
    background: #fff;
    font-size: 32px;
}

.shaded {
    width: 36px;
    height: 36px;
    background: #c0c0c0;
    font-size: 34px;
}

.circled {
    border: 2px solid #777;
    border-radius: 50%;
    font-size: 26px;
}

.bold {
    font-size: 38px;
    font-weight: 700;
    line-height: 50px;
    padding-bottom: 6px;
}

.italic {
    font: italic 700 38px "Liberation Serif", serif;
}

.under {
    border-bottom: 2px solid #5f5f5f;
    font-size: 34px;
    line-height: 30px;
    font-weight: 600;
}

.strike {
    font-size: 22px;
    text-decoration: line-through;
}

.script {
    font-size: 32px;
    font-weight: 500;
}

.script sub,
.script sup {
    color: #4a82bd;
    font-size: 18px;
    line-height: 18px;
}

.script sub {
    margin-top: 18px;
}

.script sup {
    margin-bottom: 24px;
}

.outline {
    font-size: 38px;
    color: #fff;
    -webkit-text-stroke: 2px #6ba4de;
}

.bar {
    position: relative;
    width: 50px;
    height: 46px;
    border-bottom: 12px solid;
    text-align: center;
    font-size: 38px;
    line-height: 30px;
}

.bar.yellow {
    border-color: #ff0;
    font-size: 22px;
    line-height: 22px;
    text-align: left;
    padding-left: 4px;
}

.bar.red {
    border-color: #f00;
}

.pen {
    position: absolute;
    right: 6px;
    top: 3px;
}

.num {
    fill: #4a82bd;
    font-size: 15px;
    font-weight: 600;
}

.ab {
    fill: #777;
    font-size: 22px;
    font-weight: 600;
}

.styles-group {
    flex: 1;
    padding: 15px 10px 0;
}

.gallery {
    display: flex;
    height: 150px;
    border: 2px solid #b5b5b5;
    background: #fff;
}

.style-item {
    flex: 1;
    min-width: 0;
    display: flex;
    flex-direction: column;
    align-items: center;
    padding: 0 12px;
}

.sample {
    width: 100%;
    height: 92px;
    overflow: hidden;
    text-align: left;
    font-size: 33px;
    font-weight: 300;
    line-height: 104px;
    font-family: "Open Sans", sans-serif;
    color: #000;
}

.sample.large {
    font-size: 50px;
    font-weight: 400;
}

.sample.huge {
    font-size: 68px;
    font-weight: 600;
}

.sample.strong {
    font-weight: 600;
}

.sample.subtle {
    font-style: italic;
    color: #404040;
}

.sample.slanted {
    font-style: italic;
}

.style-name {
    color: #666;
}

.style-name small {
    font-size: 20px;
}

.gallery-more {
    display: flex;
    align-items: center;
    justify-content: center;
    width: 70px;
    border-left: 2px solid #c6c6c6;
    color: #666;
}

.edit-group {
    width: 190px;
    padding: 3px 0 0 24px;
}

.edit-list .text-btn {
    height: 61px;
    gap: 7px;
}

.edit-list .text-btn .caret {
    margin-left: 12px;
}

.edit-group .group-label,
.youdao-group .group-label {
    right: 0;
}

.youdao-group {
    width: 145px;
    padding: 18px 0 0;
}

.youdao {
    display: flex;
    flex-direction: column;
    align-items: center;
    line-height: 38px;
}

.youdao svg {
    margin-bottom: 13px;
}

.collapse {
    display: flex;
    align-items: flex-end;
    justify-content: flex-end;
    width: 118px;
    padding: 0 24px 8px 0;
}

/* rulers */

.ruler-row {
    display: flex;
    height: 59px;
    padding-right: 42px;
}

.tab-stop {
    display: flex;
    align-items: center;
    justify-content: center;
    width: 50px;
    height: 50px;
    margin: 3px 4px 0 0;
    padding-top: 6px;
    border: 2px solid #d4d4d4;
    background: #fdfdfd;
}

.ruler-track {
    display: flex;
    flex: 1;
    justify-content: center;
}

.ruler {
    position: relative;
    display: flex;
    align-items: center;
    width: 2040px;
    height: 45px;
    margin: 5px 799px 0 0;
    background: linear-gradient(to right, #c6c6c6 299px, #fff 299px 1738px, #c6c6c6 1738px);
}

.ruler i {
    width: 35px;
    height: 15px;
    flex: none;
    border-left: 2px solid #555;
    text-align: center;
    font: 12px/15px "Liberation Sans", sans-serif;
    color: #333;
}

.indent-left {
    position: absolute;
    left: 288px;
    top: -3px;
}

.indent-right {
    position: absolute;
    left: 1728px;
    top: 28px;
}

.v-ruler {
    width: 47px;
    height: 372px;
    margin: 0 5px 0 2px;
    overflow: hidden;
    background: linear-gradient(#fff 128px, #c6c6c6 128px);
}

.v-ruler i {
    display: flex;
    align-items: center;
    justify-content: center;
    height: 52px;
    writing-mode: vertical-rl;
    transform: rotate(180deg);
    font: 12px/14px "Liberation Sans", sans-serif;
    color: #333;
    background:
        linear-gradient(#555, #555) center top / 14px 2px no-repeat,
        linear-gradient(#555, #555) center 6px / 4px 2px no-repeat,
        linear-gradient(#555, #555) center 12px / 4px 2px no-repeat,
        linear-gradient(#555, #555) center 38px / 4px 2px no-repeat,
        linear-gradient(#555, #555) center 44px / 4px 2px no-repeat;
}

.v-ruler .cut {
    margin-top: -29px;
}

/* document */

.canvas {
    flex: 1;
    display: flex;
    min-height: 0;
    overflow: hidden;
    padding-right: 42px;
}

.pages {
    flex: 1;
    display: flex;
    flex-direction: column;
    align-items: center;
    gap: 37px;
}

.page {
    flex: none;
    display: flex;
    width: 2838px;
    border: 1px solid #c6c6c6;
    background: #fff;
}

.page.first {
    height: 372px;
    margin-top: -2px;
}

.page.second {
    height: 1300px;
}

.page-body {
    position: relative;
    width: 2038px;
    padding: 0 300px 0 298px;
}

.second .page-body {
    padding-top: 239px;
}

.markup {
    flex: 1;
    border-left: 1px solid #c6c6c6;
}

.line {
    height: 52px;
    margin: 0;
    font: 40px/52px "Liberation Serif", serif;
    color: #000;
    white-space: nowrap;
}

.line.full {
    text-align-last: justify;
}

.line.end {
    text-align: right;
}

/* the selection runs on under the dialog */
.line.end mark {
    padding-left: 40px;
}

mark {
    background: #c0c0c0;
    color: #000;
}

.cursor {
    border-right: 2px solid #000;
}

.line small,
.page-footer small,
.footer-mark {
    margin-left: 8px;
    font: 14px "DejaVu Sans", sans-serif;
    color: #777;
}

.page-footer {
    margin-top: 14px;
    padding-left: 18px;
    text-align: center;
    font: 30px/52px "Liberation Sans", sans-serif;
    color: #999;
}

.change-bar {
    position: absolute;
    left: 176px;
    top: 124px;
    width: 5px;
    height: 42px;
    background: #a0a0a0;
}

.corner {
    position: absolute;
    width: 61px;
    height: 61px;
    border: 0 solid #a8a8a8;
}

.bottom-left {
    left: 237px;
    top: 131px;
    border-width: 1px 1px 0 0;
}

.bottom-right {
    left: 1738px;
    top: 131px;
    border-width: 1px 0 0 1px;
}

.top-right {
    left: 1738px;
    top: 178px;
    border-width: 0 0 1px 1px;
}

.footer-mark {
    position: absolute;
    left: 298px;
    top: 182px;
}

.connector {
    position: absolute;
    right: -4px;
    top: 96px;
}

.note {
    margin: 37px 0 0 -2px;
    height: 83px;
    padding: 8px 0 0 24px;
    border-left: 5px solid #808080;
    font-size: 28px;
    line-height: 32px;
}

.author {
    display: block;
    font-weight: 600;
    color: #000;
}

.change {
    font-size: 30px;
    color: #808080;
}

/* status bar */

.status {
    position: relative;
    display: flex;
    align-items: center;
    height: 81px;
    padding: 0 14px 0 10px;
    border-top: 1px solid #c6c6c6;
    border-bottom: 1px solid #777;
    background: #f3f3f3;
    gap: 38px;
}

.views {
    display: flex;
    height: 100%;
    margin-left: auto;
}

.view {
    display: flex;
    align-items: center;
    justify-content: center;
    width: 76px;
}

.view.current {
    background: #c6c6c6;
}

.zoom-btn {
    display: flex;
    margin: 0 -28px;
}

.views + .zoom-btn {
    margin-left: -26px;
}

.zoom {
    appearance: none;
    width: 248px;
    height: 28px;
    margin: 0;
    background: linear-gradient(#b0b0b0, #b0b0b0) center / 100% 3px no-repeat;
}

.zoom::-webkit-slider-thumb {
    appearance: none;
    width: 13px;
    height: 28px;
    background: #777;
}

.percent {
    margin-left: 14px;
}

.watermark {
    position: absolute;
    right: 8px;
    bottom: 6px;
    font: 15px/20px "Liberation Sans", sans-serif;
    color: #fff;
    text-shadow: 1px 1px 1px #c8c8c8;
}

/* add-ins dialog */

.dialog {
    position: absolute;
    left: 691px;
    top: 694px;
    width: 1434px;
    height: 697px;
    border: 2px solid #6f6f6f;
    background: #f0f0f0;
    color: #000;
    box-shadow: 0 8px 30px rgba(0, 0, 0, .4);
}

.dialog-title {
    display: flex;
    align-items: center;
    height: 70px;
    padding: 0 2px 2px 16px;
    background: #fff;
}

.dialog-title span {
    margin-right: auto;
}

.dialog-ctl {
    display: flex;
    align-items: center;
    justify-content: center;
    width: 115px;
    font-size: 24px;
}

.dialog-body {
    display: flex;
    justify-content: space-between;
    margin: 0 15px 0 14px;
    padding-bottom: 10px;
    border-bottom: 2px solid #dcdcdc;
}

.list-label {
    padding: 20px 0 9px;
}

.list {
    display: flex;
    width: 1205px;
    height: 316px;
    padding: 3px;
    border: 1px solid #828790;
    background: #fff;
}

.items {
    flex: 1;
}

.item {
    display: flex;
    align-items: center;
    height: 39px;
    line-height: 38px;
}

.item span {
    flex: 1;
    margin-left: 2px;
    padding-left: 4px;
}

.item.selected {
    outline: 1px dotted #333;
    outline-offset: -1px;
}

.selected span {
    background: #0078d7;
    color: #fff;
}

.item input {
    appearance: none;
    position: relative;
    width: 31px;
    height: 31px;
    margin: 0 0 0 1px;
    border: 2px solid #333;
    background: #fff;
}

.item input:checked::after {
    content: "";
    position: absolute;
    left: 9px;
    top: 1px;
    width: 9px;
    height: 19px;
    border: solid #333;
    border-width: 0 2px 2px 0;
    transform: rotate(42deg);
}

.scroll {
    display: flex;
    flex-direction: column;
    align-items: center;
    width: 42px;
    padding: 14px 0;
    background: #f0f0f0;
}

.thumb {
    width: 100%;
    height: 156px;
    margin: 14px 0 auto;
    background: #cdcdcd;
}

.dialog-buttons {
    display: flex;
    flex-direction: column;
    padding-top: 20px;
}

.btn {
    width: 174px;
    height: 67px;
    border: 1px solid #adadad;
    background: #e1e1e1;
}

.btn.default {
    border: 2px solid #0078d7;
}

.btn.hover {
    margin-top: 11px;
    border-color: #0078d7;
    background: #e5f1fb;
}

.btn.spaced {
    margin-top: 21px;
}

.info {
    display: grid;
    grid-template-columns: 148px 1fr;
    row-gap: 20px;
    margin: 10px 14px;
}

.info dd {
    margin: 0;
}
```
